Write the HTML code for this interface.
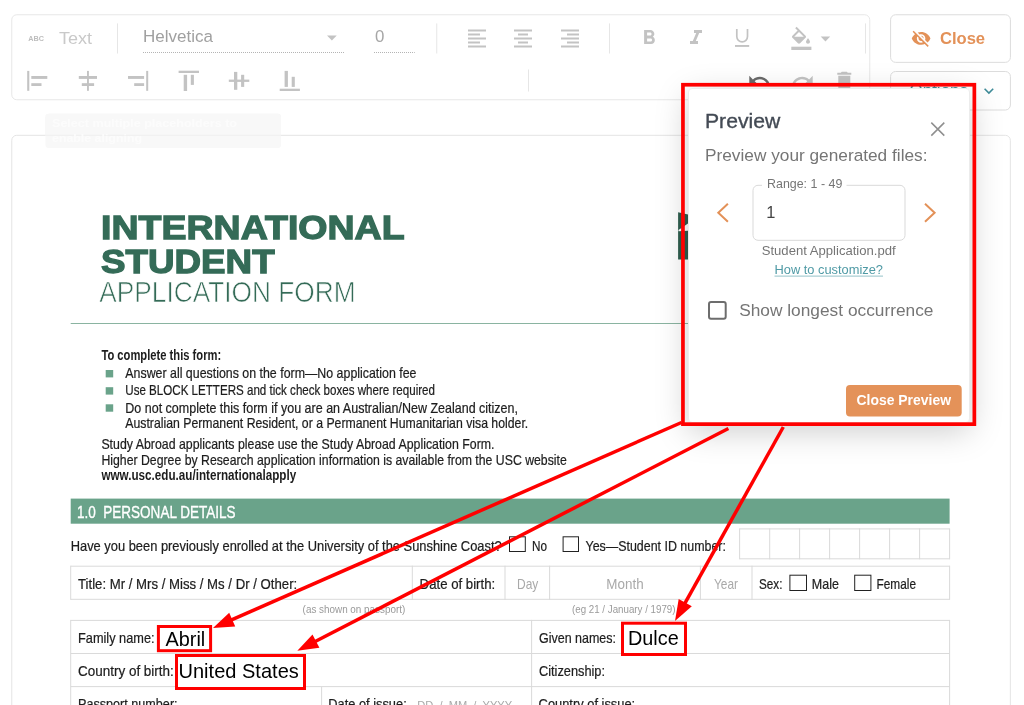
<!DOCTYPE html>
<html lang="en"><head><meta charset="utf-8"><title>Preview</title>
<style>
html,body{margin:0;padding:0;background:#fff;}
body{width:1024px;height:705px;position:relative;overflow:hidden;font-family:"Liberation Sans", sans-serif;}
svg{position:absolute;left:0;top:0;font-family:"Liberation Sans", sans-serif;will-change:transform;}
#popup{position:absolute;left:688px;top:88px;width:282.300px;height:334.500px;background:#fff;border-radius:4px;
box-shadow:0 8px 33px rgba(0,0,0,0.205);border:1px solid #ececec;box-sizing:border-box;}
</style></head><body>
<svg width="1024" height="705" viewBox="0 0 1024 705">
<rect x="11.75" y="14.75" width="858" height="85" rx="5" fill="#fff" stroke="#e7e7e7"/>
<text x="28.2" y="41.2" font-size="7" fill="#bdbdbd" font-weight="bold" text-anchor="start" textLength="15.7" lengthAdjust="spacingAndGlyphs" >ABC</text>
<text x="59" y="43.9" font-size="16.9" fill="#c9c9c9" font-weight="normal" text-anchor="start" textLength="33" lengthAdjust="spacingAndGlyphs" >Text</text>
<rect x="117.0" y="23.4" width="1" height="30.1" fill="#e6e6e6"/>
<rect x="436.25" y="23.4" width="1" height="30.1" fill="#e6e6e6"/>
<rect x="609.0" y="23.4" width="1" height="30.1" fill="#e6e6e6"/>
<rect x="865.0" y="23.4" width="1" height="30.1" fill="#e6e6e6"/>
<text x="143" y="42.2" font-size="16.8" fill="#a0a0a0" font-weight="normal" text-anchor="start" textLength="70" lengthAdjust="spacingAndGlyphs" >Helvetica</text>
<line x1="143" y1="52.5" x2="344.75" y2="52.5" stroke="#b4b4b4" stroke-width="1" stroke-dasharray="1 1"/>
<path d="M327 35.5h9.75l-4.875 4.9z" fill="#c3c3c3"/>
<text x="375" y="42.2" font-size="16.9" fill="#a6a6a6" font-weight="normal" text-anchor="start" textLength="9.4" lengthAdjust="spacingAndGlyphs" >0</text>
<line x1="374" y1="52.5" x2="414.75" y2="52.5" stroke="#b4b4b4" stroke-width="1" stroke-dasharray="1 1"/>
<path transform="translate(465 26.5)" fill="#c3c3c3" d="M15 15H3v2h12v-2zm0-8H3v2h12V7zM3 13h18v-2H3v2zm0 8h18v-2H3v2zM3 3v2h18V3H3z"/>
<path transform="translate(511 26.5)" fill="#c3c3c3" d="M7 15v2h10v-2H7zm-4 6h18v-2H3v2zm0-8h18v-2H3v2zm4-6v2h10V7H7zM3 3v2h18V3H3z"/>
<path transform="translate(558 26.5)" fill="#c3c3c3" d="M3 21h18v-2H3v2zm6-4h12v-2H9v2zm-6-4h18v-2H3v2zm6-4h12V7H9v2zM3 3v2h18V3H3z"/>
<path transform="translate(637.1 26)" fill="#c3c3c3" d="M15.6 10.79c.97-.67 1.65-1.77 1.65-2.79 0-2.26-1.75-4-4-4H7v14h7.04c2.09 0 3.71-1.7 3.71-3.79 0-1.52-.86-2.82-2.15-3.42zM10 6.5h3c.83 0 1.5.67 1.5 1.5s-.67 1.5-1.5 1.5h-3v-3zm3.500 9H10v-3h3.5c.83 0 1.5.67 1.500 1.500s-.67 1.500-1.500 1.500z"/>
<path transform="translate(684 26)" fill="#c3c3c3" d="M10 4v3h2.210l-3.420 8H6v3h8v-3h-2.210l3.420-8H18V4z"/>
<path d="M736.8 29v7.500a5.350 5.350 0 0 0 10.700 0V29" fill="none" stroke="#c3c3c3" stroke-width="1.700"/><rect x="735" y="45" width="14.2" height="1.9" fill="#c3c3c3"/>
<path transform="translate(789 26.8)" fill="#c3c3c3" d="M16.560 8.940L7.620 0 6.210 1.410l2.380 2.380-5.150 5.150c-.590.590-.590 1.540 0 2.120l5.500 5.500c.290.290.680.440 1.060.440s.770-.150 1.060-.440l5.500-5.500c.590-.580.590-1.530 0-2.120zM5.210 10L10 5.210 14.790 10H5.210zM19 11.500s-2 2.170-2 3.500c0 1.100.900 2 2 2s2-.900 2-2c0-1.330-2-3.500-2-3.500z"/>
<rect x="791.3" y="46.7" width="20.1" height="3.3" fill="#c3c3c3"/>
<path d="M820.7 36.6h9.5l-4.75 4.9z" fill="#c3c3c3"/>
<rect x="27.2" y="70.9" width="2.1" height="19.9" fill="#c3c3c3"/>
<rect x="31.3" y="76" width="16.0" height="2.9" fill="#c3c3c3"/>
<rect x="31.3" y="83.2" width="10.2" height="2.8" fill="#c3c3c3"/>
<rect x="87" y="70.9" width="1.9" height="19.9" fill="#c3c3c3"/>
<rect x="78.8" y="76" width="18.2" height="2.9" fill="#c3c3c3"/>
<rect x="81.8" y="83.2" width="12.3" height="2.8" fill="#c3c3c3"/>
<rect x="146.2" y="70.9" width="2.0" height="19.9" fill="#c3c3c3"/>
<rect x="128" y="76" width="16.1" height="2.9" fill="#c3c3c3"/>
<rect x="134.2" y="83.2" width="9.9" height="2.8" fill="#c3c3c3"/>
<rect x="178.6" y="70.7" width="20.4" height="2.3" fill="#c3c3c3"/>
<rect x="183.7" y="74.8" width="3.4" height="16.2" fill="#c3c3c3"/>
<rect x="190.8" y="74.8" width="3.1" height="10.1" fill="#c3c3c3"/>
<rect x="228.8" y="79.6" width="20.5" height="2.3" fill="#c3c3c3"/>
<rect x="234" y="71.9" width="3.3" height="17.9" fill="#c3c3c3"/>
<rect x="241.1" y="74.8" width="3.1" height="12.1" fill="#c3c3c3"/>
<rect x="279.7" y="88.7" width="20.2" height="2.3" fill="#c3c3c3"/>
<rect x="284.6" y="70.9" width="3.3" height="16.0" fill="#c3c3c3"/>
<rect x="291.7" y="76.8" width="3.1" height="10.1" fill="#c3c3c3"/>
<rect x="528" y="69.5" width="1" height="22" fill="#e6e6e6"/>
<path transform="translate(747.3 68.8)" fill="#6a6a6a" d="M12.500 8c-2.650 0-5.050.990-6.900 2.600L2 7v9h9l-3.620-3.620c1.390-1.160 3.160-1.880 5.120-1.880 3.540 0 6.550 2.310 7.600 5.500l2.370-.780C21.080 11.030 17.150 8 12.500 8z"/>
<path transform="translate(790.7 68.8)" fill="#c3c3c3" d="M18.400 10.600C16.550 8.990 14.150 8 11.500 8c-4.650 0-8.580 3.030-9.960 7.220L3.900 16c1.050-3.190 4.050-5.500 7.600-5.500 1.950 0 3.730.720 5.120 1.880L13 16h9V7l-3.600 3.600z"/>
<path transform="translate(832.3 68.7)" fill="#c3c3c3" d="M6 19c0 1.100.900 2 2 2h8c1.100 0 2-.900 2-2V7H6v12zM19 4h-3.500l-1-1h-5l-1 1H5v2h14V4z"/>
<rect x="890.6" y="14.75" width="119.8" height="47.6" rx="5" fill="#fff" stroke="#dcdcdc"/>
<rect x="890.6" y="71.5" width="119.8" height="38.5" rx="5" fill="#fff" stroke="#dcdcdc"/>
<path transform="translate(910.9 28.2) scale(0.85)" fill="#e39158" d="M12 7c2.760 0 5 2.240 5 5 0 .650-.130 1.260-.360 1.830l2.920 2.920c1.510-1.260 2.700-2.890 3.430-4.750-1.730-4.390-6-7.500-11-7.500-1.400 0-2.740.250-3.980.700l2.160 2.160C10.740 7.130 11.350 7 12 7zM2 4.270l2.280 2.280.460.460C3.080 8.300 1.780 10.020 1 12c1.730 4.390 6 7.500 11 7.500 1.550 0 3.030-.300 4.380-.840l.420.420L19.730 22 21 20.730 3.270 3 2 4.270zM7.530 9.800l1.550 1.550c-.050.210-.080.430-.080.650 0 1.660 1.340 3 3 3 .220 0 .440-.030.650-.080l1.550 1.550c-.670.330-1.410.530-2.200.530-2.760 0-5-2.240-5-5 0-.790.200-1.530.530-2.200zm4.310-.780l3.150 3.150.020-.160c0-1.660-1.340-3-3-3l-.170.010z"/>
<text x="939.9" y="43.8" font-size="16.9" fill="#e39158" font-weight="bold" text-anchor="start" textLength="45.2" lengthAdjust="spacingAndGlyphs" >Close</text>
<text x="909.5" y="95.9" font-size="16.9" fill="#3f8c99" font-weight="normal" text-anchor="start" textLength="58.5" lengthAdjust="spacingAndGlyphs" >Options</text>
<path d="M984.6 88.8l4.3 4.3 4.3-4.300" fill="none" stroke="#3f8c99" stroke-width="1.6"/>
<rect x="45.5" y="113.75" width="235.5" height="34.3" rx="3" fill="#f6f6f6"/>
<rect x="11.75" y="135.3" width="998.6" height="600" rx="5" fill="#fff" stroke="#e4e4e4"/>
<rect x="45.5" y="113.75" width="235.5" height="34.3" rx="3" fill="#f8f8f8"/>
<rect x="45.5" y="134.8" width="235.5" height="1" fill="#efefef"/>
<text x="52" y="127" font-size="11" fill="#fcfcfc" font-weight="bold" text-anchor="start" textLength="185" lengthAdjust="spacingAndGlyphs" >Select multiple placeholders to</text>
<text x="52" y="142" font-size="11" fill="#fcfcfc" font-weight="bold" text-anchor="start" textLength="90" lengthAdjust="spacingAndGlyphs" >enable aligning</text>
<text x="101.1" y="239.35" font-size="33.8" fill="#346b57" font-weight="bold" text-anchor="start" textLength="303.5" lengthAdjust="spacingAndGlyphs" stroke="#346b57" stroke-width="1.3">INTERNATIONAL</text>
<text x="101.1" y="272.65" font-size="33.8" fill="#346b57" font-weight="bold" text-anchor="start" textLength="173.5" lengthAdjust="spacingAndGlyphs" stroke="#346b57" stroke-width="1.3">STUDENT</text>
<text x="99.3" y="302.4" font-size="29.8" fill="#346b57" font-weight="normal" text-anchor="start" textLength="256.3" lengthAdjust="spacingAndGlyphs" stroke="#fff" stroke-width="0.7" paint-order="fill stroke">APPLICATION FORM</text>
<rect x="70.7" y="323" width="880" height="1" fill="#8ab4a1"/>
<path d="M678.1 212.3L688 214.5V259.6H678.1z" fill="#2f5e4e"/><path d="M688 223.5V230.8L678.5 231.2V230z" fill="#fff"/>
<text x="101.4" y="360.4" font-size="14.6" fill="#1d1d1d" font-weight="bold" text-anchor="start" textLength="119.8" lengthAdjust="spacingAndGlyphs" >To complete this form:</text>
<rect x="105.7" y="370" width="7.5" height="7.4" fill="#6aa38a"/>
<rect x="105.7" y="387.2" width="7.5" height="7.4" fill="#6aa38a"/>
<rect x="105.7" y="404.3" width="7.5" height="7.4" fill="#6aa38a"/>
<text x="125.3" y="378.2" font-size="14.6" fill="#1d1d1d" font-weight="normal" text-anchor="start" textLength="291.2" lengthAdjust="spacingAndGlyphs" stroke="#1d1d1d" stroke-width="0.22">Answer all questions on the form—No application fee</text>
<text x="125.3" y="395.4" font-size="14.6" fill="#1d1d1d" font-weight="normal" text-anchor="start" textLength="309.7" lengthAdjust="spacingAndGlyphs" stroke="#1d1d1d" stroke-width="0.22">Use BLOCK LETTERS and tick check boxes where required</text>
<text x="125.3" y="412.5" font-size="14.6" fill="#1d1d1d" font-weight="normal" text-anchor="start" textLength="392.7" lengthAdjust="spacingAndGlyphs" stroke="#1d1d1d" stroke-width="0.22">Do not complete this form if you are an Australian/New Zealand citizen,</text>
<text x="125.3" y="427.7" font-size="14.6" fill="#1d1d1d" font-weight="normal" text-anchor="start" textLength="402.9" lengthAdjust="spacingAndGlyphs" stroke="#1d1d1d" stroke-width="0.22">Australian Permanent Resident, or a Permanent Humanitarian visa holder.</text>
<text x="101.4" y="448.5" font-size="14.6" fill="#1d1d1d" font-weight="normal" text-anchor="start" textLength="393.1" lengthAdjust="spacingAndGlyphs" stroke="#1d1d1d" stroke-width="0.22">Study Abroad applicants please use the Study Abroad Application Form.</text>
<text x="101.4" y="464.5" font-size="14.6" fill="#1d1d1d" font-weight="normal" text-anchor="start" textLength="465.4" lengthAdjust="spacingAndGlyphs" stroke="#1d1d1d" stroke-width="0.22">Higher Degree by Research application information is available from the USC website</text>
<text x="101.4" y="480.3" font-size="14" fill="#1d1d1d" font-weight="bold" text-anchor="start" textLength="194.8" lengthAdjust="spacingAndGlyphs" >www.usc.edu.au/internationalapply</text>
<rect x="70.7" y="498.6" width="878.9" height="25.1" fill="#6aa38a"/>
<text x="77" y="517.6" font-size="17.4" fill="#fff" font-weight="normal" text-anchor="start" textLength="158.5" lengthAdjust="spacingAndGlyphs" stroke="#fff" stroke-width="0.35">1.0&#160;&#160;PERSONAL DETAILS</text>
<text x="70.7" y="550.8" font-size="14.6" fill="#1d1d1d" font-weight="normal" text-anchor="start" textLength="431" lengthAdjust="spacingAndGlyphs" stroke="#1d1d1d" stroke-width="0.22">Have you been previously enrolled at the University of the Sunshine Coast?</text>
<rect x="509.5" y="536.8" width="15.8" height="14.7" fill="#fff" stroke="#222" stroke-width="1"/>
<text x="532" y="550.8" font-size="14.6" fill="#1d1d1d" font-weight="normal" text-anchor="start" textLength="15" lengthAdjust="spacingAndGlyphs" stroke="#1d1d1d" stroke-width="0.22">No</text>
<rect x="563.1" y="536.8" width="15.4" height="14.7" fill="#fff" stroke="#222" stroke-width="1"/>
<text x="585.5" y="550.8" font-size="14.6" fill="#1d1d1d" font-weight="normal" text-anchor="start" textLength="140.4" lengthAdjust="spacingAndGlyphs" stroke="#1d1d1d" stroke-width="0.22">Yes—Student ID number:</text>
<rect x="739.6" y="528.4" width="210.0" height="1" fill="#dadada"/>
<rect x="739.6" y="558.3" width="210.0" height="1" fill="#dadada"/>
<rect x="739.1" y="528.4" width="1" height="30.9" fill="#dadada"/>
<rect x="769.2" y="528.4" width="1" height="30.9" fill="#dadada"/>
<rect x="799.1" y="528.4" width="1" height="30.9" fill="#dadada"/>
<rect x="829.1" y="528.4" width="1" height="30.9" fill="#dadada"/>
<rect x="859.1" y="528.4" width="1" height="30.9" fill="#dadada"/>
<rect x="889.1" y="528.4" width="1" height="30.9" fill="#dadada"/>
<rect x="919.1" y="528.4" width="1" height="30.9" fill="#dadada"/>
<rect x="949.1" y="528.4" width="1" height="30.9" fill="#dadada"/>
<rect x="70.7" y="565.7" width="878.9" height="1" fill="#dadada"/>
<rect x="70.7" y="598.8" width="878.9" height="1" fill="#dadada"/>
<rect x="70.2" y="565.7" width="1" height="34.1" fill="#dadada"/>
<rect x="411.8" y="565.7" width="1" height="34.1" fill="#dadada"/>
<rect x="504.5" y="565.7" width="1" height="34.1" fill="#dadada"/>
<rect x="549.1" y="565.7" width="1" height="34.1" fill="#dadada"/>
<rect x="699.9" y="565.7" width="1" height="34.1" fill="#dadada"/>
<rect x="751.5" y="565.7" width="1" height="34.1" fill="#dadada"/>
<rect x="949.1" y="565.7" width="1" height="34.1" fill="#dadada"/>
<text x="78" y="588.5" font-size="14.6" fill="#1d1d1d" font-weight="normal" text-anchor="start" textLength="219.2" lengthAdjust="spacingAndGlyphs" stroke="#1d1d1d" stroke-width="0.22">Title: Mr / Mrs / Miss / Ms / Dr / Other:</text>
<text x="419.6" y="588.5" font-size="14.6" fill="#1d1d1d" font-weight="normal" text-anchor="start" textLength="75.6" lengthAdjust="spacingAndGlyphs" stroke="#1d1d1d" stroke-width="0.22">Date of birth:</text>
<text x="517" y="588.5" font-size="14.6" fill="#a9a9a9" font-weight="normal" text-anchor="start" textLength="21.3" lengthAdjust="spacingAndGlyphs" >Day</text>
<text x="606.3" y="588.5" font-size="14.6" fill="#a9a9a9" font-weight="normal" text-anchor="start" textLength="37.3" lengthAdjust="spacingAndGlyphs" >Month</text>
<text x="714" y="588.5" font-size="14.6" fill="#a9a9a9" font-weight="normal" text-anchor="start" textLength="24" lengthAdjust="spacingAndGlyphs" >Year</text>
<text x="759" y="588.5" font-size="14.6" fill="#1d1d1d" font-weight="normal" text-anchor="start" textLength="23.4" lengthAdjust="spacingAndGlyphs" stroke="#1d1d1d" stroke-width="0.22">Sex:</text>
<rect x="789.9" y="575.2" width="16.6" height="15.3" fill="#fff" stroke="#222" stroke-width="1"/>
<text x="811.8" y="588.5" font-size="14.6" fill="#1d1d1d" font-weight="normal" text-anchor="start" textLength="27.1" lengthAdjust="spacingAndGlyphs" stroke="#1d1d1d" stroke-width="0.22">Male</text>
<rect x="854.7" y="575.2" width="16.2" height="15.3" fill="#fff" stroke="#222" stroke-width="1"/>
<text x="876.5" y="588.5" font-size="14.6" fill="#1d1d1d" font-weight="normal" text-anchor="start" textLength="39.5" lengthAdjust="spacingAndGlyphs" stroke="#1d1d1d" stroke-width="0.22">Female</text>
<text x="302.6" y="613" font-size="10.6" fill="#9a9a9a" font-weight="normal" text-anchor="start" textLength="102.7" lengthAdjust="spacingAndGlyphs" >(as shown on passport)</text>
<text x="572" y="613" font-size="10.6" fill="#9a9a9a" font-weight="normal" text-anchor="start" textLength="103.5" lengthAdjust="spacingAndGlyphs" >(eg 21 / January / 1979)</text>
<rect x="70.7" y="619.9" width="878.9" height="1" fill="#dadada"/>
<rect x="70.7" y="653.0" width="878.9" height="1" fill="#dadada"/>
<rect x="70.7" y="686.1" width="878.9" height="1" fill="#dadada"/>
<rect x="70.2" y="619.9" width="1" height="85.1" fill="#dadada"/>
<rect x="949.1" y="619.9" width="1" height="85.1" fill="#dadada"/>
<rect x="531.1" y="619.9" width="1" height="85.1" fill="#dadada"/>
<rect x="321.1" y="686.6" width="1" height="18.4" fill="#dadada"/>
<text x="78" y="642.9" font-size="14.6" fill="#1d1d1d" font-weight="normal" text-anchor="start" textLength="76.6" lengthAdjust="spacingAndGlyphs" stroke="#1d1d1d" stroke-width="0.22">Family name:</text>
<text x="78" y="675.8" font-size="14.6" fill="#1d1d1d" font-weight="normal" text-anchor="start" textLength="95.8" lengthAdjust="spacingAndGlyphs" stroke="#1d1d1d" stroke-width="0.22">Country of birth:</text>
<text x="78" y="709.2" font-size="14.6" fill="#1d1d1d" font-weight="normal" text-anchor="start" textLength="99.6" lengthAdjust="spacingAndGlyphs" stroke="#1d1d1d" stroke-width="0.22">Passport number:</text>
<text x="328.3" y="709.2" font-size="14.6" fill="#1d1d1d" font-weight="normal" text-anchor="start" textLength="78.4" lengthAdjust="spacingAndGlyphs" stroke="#1d1d1d" stroke-width="0.22">Date of issue:</text>
<text x="417.2" y="709.2" font-size="10.6" fill="#a9a9a9" font-weight="normal" text-anchor="start" textLength="95" lengthAdjust="spacingAndGlyphs" >DD&#160;&#160;/&#160;&#160;MM&#160;&#160;/&#160;&#160;YYYY</text>
<text x="539" y="643.3" font-size="14.6" fill="#1d1d1d" font-weight="normal" text-anchor="start" textLength="77" lengthAdjust="spacingAndGlyphs" stroke="#1d1d1d" stroke-width="0.22">Given names:</text>
<text x="539" y="676.3" font-size="14.6" fill="#1d1d1d" font-weight="normal" text-anchor="start" textLength="66" lengthAdjust="spacingAndGlyphs" stroke="#1d1d1d" stroke-width="0.22">Citizenship:</text>
<text x="538.6" y="709.2" font-size="14.6" fill="#1d1d1d" font-weight="normal" text-anchor="start" textLength="96.6" lengthAdjust="spacingAndGlyphs" stroke="#1d1d1d" stroke-width="0.22">Country of issue:</text>
</svg>
<div id="popup"></div>
<svg width="1024" height="705" viewBox="0 0 1024 705">
<text x="705" y="128" font-size="20.8" fill="#434a54" font-weight="normal" text-anchor="start" textLength="75.3" lengthAdjust="spacingAndGlyphs" stroke="#434a54" stroke-width="0.35">Preview</text>
<path d="M931.3 122.600l13 13m0-13l-13 13" stroke="#8f8f8f" stroke-width="1.5" fill="none"/>
<text x="705" y="161.2" font-size="16.9" fill="#757575" font-weight="normal" text-anchor="start" textLength="222.5" lengthAdjust="spacingAndGlyphs" >Preview your generated files:</text>
<rect x="753" y="185.3" width="152" height="55" rx="5" fill="#fff" stroke="#d9d9d9"/>
<rect x="762" y="180" width="84.500" height="10" fill="#fff"/>
<text x="767" y="188.2" font-size="12.6" fill="#757575" font-weight="normal" text-anchor="start" textLength="75.3" lengthAdjust="spacingAndGlyphs" >Range: 1 - 49</text>
<text x="766.3" y="217.9" font-size="16.4" fill="#444" font-weight="normal" text-anchor="start" >1</text>
<path d="M727.9 203.800l-9.600 9 9.600 9" fill="none" stroke="#e39158" stroke-width="2"/>
<path d="M925 203.800l9.600 9-9.600 9" fill="none" stroke="#e39158" stroke-width="2"/>
<text x="761.7" y="255" font-size="13.2" fill="#757575" font-weight="normal" text-anchor="start" textLength="134" lengthAdjust="spacingAndGlyphs" >Student Application.pdf</text>
<text x="774.5" y="274.2" font-size="13.2" fill="#4f9aa5" font-weight="normal" text-anchor="start" textLength="108.5" lengthAdjust="spacingAndGlyphs" >How to customize?</text>
<rect x="774.5" y="275.600" width="108.500" height="1" fill="#4f9aa5" fill-opacity="0.6"/>
<rect x="709" y="302" width="16.700" height="16.700" rx="2" fill="#fff" stroke="#6d6d6d" stroke-width="2"/>
<text x="739.2" y="315.5" font-size="16.9" fill="#757575" font-weight="normal" text-anchor="start" textLength="194.3" lengthAdjust="spacingAndGlyphs" >Show longest occurrence</text>
<rect x="846" y="385" width="115.700" height="31.400" rx="4" fill="#e49259"/>
<text x="856.5" y="404.9" font-size="14.8" fill="#fff" font-weight="bold" text-anchor="start" textLength="94.5" lengthAdjust="spacingAndGlyphs" >Close Preview</text>
<rect x="682.950" y="84.750" width="291.400" height="339.400" fill="none" stroke="#ff0000" stroke-width="3.700"/>
<line x1="681.5" y1="422.5" x2="230.4" y2="620.4" stroke="#ff0000" stroke-width="3.5"/><path d="M213.0 628.0L229.2 612.7L235.2 626.4z" fill="#ff0000"/>
<line x1="728.4" y1="428.5" x2="314.2" y2="642.0" stroke="#ff0000" stroke-width="3.5"/><path d="M297.3 650.7L312.5 634.4L319.4 647.7z" fill="#ff0000"/>
<line x1="783.3" y1="427.0" x2="684.3" y2="604.4" stroke="#ff0000" stroke-width="3.5"/><path d="M675.0 621.0L678.7 599.0L691.8 606.3z" fill="#ff0000"/>
<rect x="158.4" y="626.5" width="52.2" height="24.2" fill="#fff" stroke="#ff0000" stroke-width="3"/>
<text x="165.5" y="645.9" font-size="20.2" fill="#000" font-weight="normal" text-anchor="start" textLength="39.8" lengthAdjust="spacingAndGlyphs" >Abril</text>
<rect x="176.5" y="655.5" width="128" height="33" fill="#fff" stroke="#ff0000" stroke-width="3"/>
<text x="178.5" y="678" font-size="20.2" fill="#000" font-weight="normal" text-anchor="start" textLength="120.3" lengthAdjust="spacingAndGlyphs" >United States</text>
<rect x="622.5" y="623.2" width="63" height="31.3" fill="#fff" stroke="#ff0000" stroke-width="3"/>
<text x="628" y="645.3" font-size="20.2" fill="#000" font-weight="normal" text-anchor="start" textLength="50.7" lengthAdjust="spacingAndGlyphs" >Dulce</text>
</svg>
</body></html>
